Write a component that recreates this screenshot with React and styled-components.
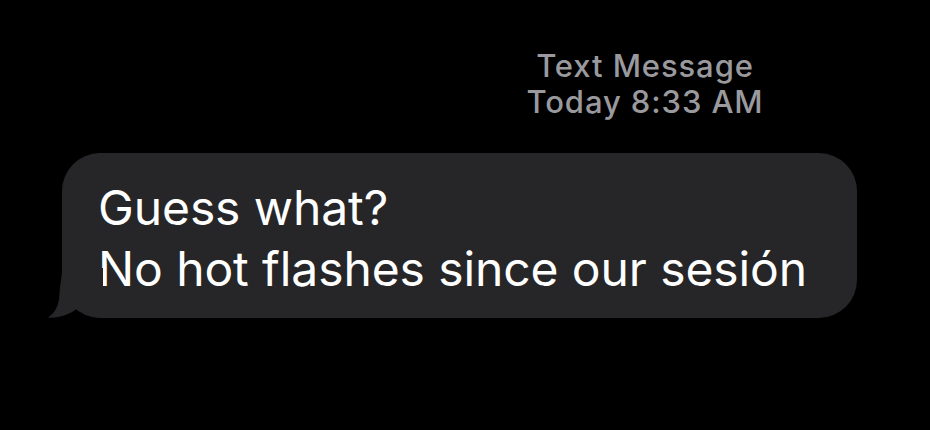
import React from "react";
import styled, { createGlobalStyle } from "styled-components";

const GlobalStyle = createGlobalStyle`
  html, body {
    margin: 0;
    padding: 0;
    background: #000;
  }
  body {
    font-family: Inter, "Liberation Sans", Arial, sans-serif;
    -webkit-font-smoothing: antialiased;
  }
`;

const Screen = styled.div`
  width: 930px;
  height: 430px;
  background: #000;
  display: flex;
  flex-direction: column;
  overflow: hidden;
`;

const Header = styled.div`
  align-self: flex-start;
  margin: 48px 0 0 495px;
  width: 300px;
  text-align: center;
  color: #9a9a9e;
  font-size: 31px;
  font-weight: 500;
  letter-spacing: 0.9px;
  line-height: 36px;
`;

const Row = styled.div`
  display: flex;
  padding: 33px 0 0 62px;
`;

const Bubble = styled.div`
  position: relative;
  width: 795px;
  box-sizing: border-box;
  padding: 24px 20px 19px 36px;
  background: #262628;
  border-radius: 38px;
  color: #fff;
  font-size: 48px;
  letter-spacing: -0.1px;
  line-height: 61px;
`;

const Tail = styled.svg`
  position: absolute;
  left: -15px;
  bottom: 0;
  display: block;
`;

export default function App() {
  return (
    <Screen>
      <GlobalStyle />
      <Header>
        <div>Text Message</div>
        <div>Today 8:33 AM</div>
      </Header>
      <Row>
        <Bubble>
          <Tail width="56" height="50" viewBox="0 0 56 50">
            <path
              d="M15 0 C15 10 13 16 12.5 26 C12 38 8 45 1 49.5 C10 50.5 22 47 31 40 C36 45 44 50 56 50 L56 0 Z"
              fill="#262628"
            />
          </Tail>
          <div>Guess what?</div>
          <div>No hot flashes since our sesión</div>
        </Bubble>
      </Row>
    </Screen>
  );
}
